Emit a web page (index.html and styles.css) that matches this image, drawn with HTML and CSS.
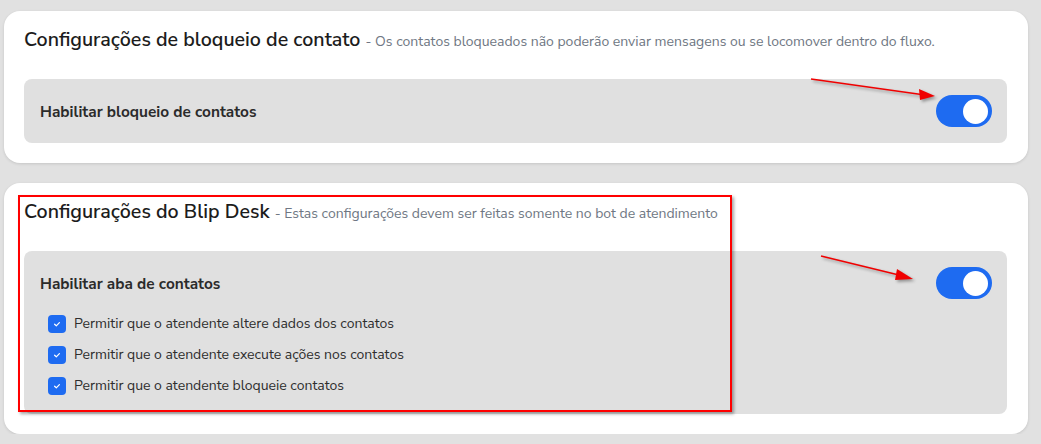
FILE: index.html
```html
<!DOCTYPE html>
<html lang="pt-BR">
<head>
    <meta charset="UTF-8">
    <meta name="viewport" content="width=device-width, initial-scale=1.0">
    <title>Configurações</title>
    <link rel="stylesheet" href="styles.css">
</head>
<body>
    <div class="settings">
        <section class="card">
            <h2 class="card-title">Configurações de bloqueio de contato <span class="card-sub">- Os contatos bloqueados não poderão enviar mensagens ou se locomover dentro do fluxo.</span></h2>
            <div class="option-box">
                <div class="option-row">
                    <span class="option-label">Habilitar bloqueio de contatos</span>
                    <span class="toggle on"><span class="knob"></span></span>
                </div>
            </div>
            <svg class="arrow arrow-one" width="140" height="30" viewBox="0 0 140 30">
                <line x1="4" y1="4" x2="118" y2="20" class="arrow-line"/>
                <polygon points="128,21 112,14 113,25" class="arrow-head"/>
            </svg>
        </section>

        <section class="card">
            <h2 class="card-title">Configurações do Blip Desk <span class="card-sub">- Estas configurações devem ser feitas somente no bot de atendimento</span></h2>
            <div class="option-box">
                <div class="option-row">
                    <span class="option-label">Habilitar aba de contatos</span>
                    <span class="toggle on"><span class="knob"></span></span>
                </div>
                <ul class="check-list">
                    <li><span class="check"><svg width="10" height="10" viewBox="0 0 10 10"><path d="M2.6 5.2 L4.3 6.8 L7.4 3.6"/></svg></span>Permitir que o atendente altere dados dos contatos</li>
                    <li><span class="check"><svg width="10" height="10" viewBox="0 0 10 10"><path d="M2.6 5.2 L4.3 6.8 L7.4 3.6"/></svg></span>Permitir que o atendente execute ações nos contatos</li>
                    <li><span class="check"><svg width="10" height="10" viewBox="0 0 10 10"><path d="M2.6 5.2 L4.3 6.8 L7.4 3.6"/></svg></span>Permitir que o atendente bloqueie contatos</li>
                </ul>
            </div>
            <div class="highlight"></div>
            <svg class="arrow arrow-two" width="120" height="34" viewBox="0 0 120 34">
                <line x1="4" y1="4" x2="86" y2="24" class="arrow-line"/>
                <polygon points="96,27 80,17 78,28" class="arrow-head"/>
            </svg>
        </section>
    </div>
</body>
</html>
```

FILE: styles.css
```css
/* Page */
body {
    margin: 0;
    background-color: #e1e1e1;
    font-family: "Nunito Sans", Lato, "Noto Sans", sans-serif;
    color: #1f1f1f;
}

.settings {
    display: flex;
    flex-direction: column;
    gap: 20px;
    padding: 11px 13px 0 4px;
}

/* Cards */
.card {
    position: relative;
    background-color: #fff;
    border-radius: 16px;
    padding: 17px 21px 20px 20px;
    box-shadow: 0 1px 3px rgba(0,0,0,0.12);
}

.card-title {
    margin: 0 0 27px;
    font-size: 19.6px;
    font-weight: 600;
    line-height: 24px;
    color: #1c1c1c;
}

.card-sub {
    font-size: 14px;
    font-weight: 400;
    line-height: 16px;
    color: #6f7783;
}

/* Option boxes */
.option-box {
    background-color: #e0e0e0;
    border-radius: 8px;
    padding: 16px 15px 16px 16px;
}

.option-row {
    display: flex;
    justify-content: space-between;
    align-items: center;
}

.option-label {
    font-size: 15.4px;
    font-weight: 700;
    color: #2b2b2b;
}

.toggle {
    width: 56px;
    height: 32px;
    border-radius: 16px;
    background-color: #1e6bf1;
    display: flex;
    align-items: center;
    justify-content: flex-end;
    padding: 0 4px;
    box-sizing: border-box;
}

.knob {
    width: 25px;
    height: 25px;
    border-radius: 50%;
    background-color: #fff;
}

.check-list {
    list-style: none;
    margin: 9px 0 -3px;
    padding: 0 0 0 8px;
}

.check-list li {
    display: flex;
    align-items: center;
    gap: 8px;
    height: 31px;
    font-size: 14px;
    color: #2e2e2e;
}

.check {
    width: 18px;
    height: 18px;
    border-radius: 4px;
    background-color: #1e6bf1;
    display: flex;
    align-items: center;
    justify-content: center;
}

.check path {
    fill: none;
    stroke: #fff;
    stroke-width: 1.2;
    stroke-linecap: round;
    stroke-linejoin: round;
}

/* Annotations drawn over the screenshot */
.arrow {
    position: absolute;
    overflow: visible;
    filter: drop-shadow(2px 2px 1.5px rgba(0,0,0,0.35));
}

.arrow-line {
    stroke: #f00000;
    stroke-width: 1.6;
}

.arrow-head {
    fill: #f00000;
}

.arrow-one {
    left: 803px;
    top: 64px;
}

.arrow-two {
    left: 813px;
    top: 69px;
}

.highlight {
    position: absolute;
    left: 14px;
    top: 12px;
    width: 710px;
    height: 213px;
    border: 2px solid #ff0000;
    box-shadow: 2px 2px 3px rgba(0,0,0,0.35);
    pointer-events: none;
}
```
